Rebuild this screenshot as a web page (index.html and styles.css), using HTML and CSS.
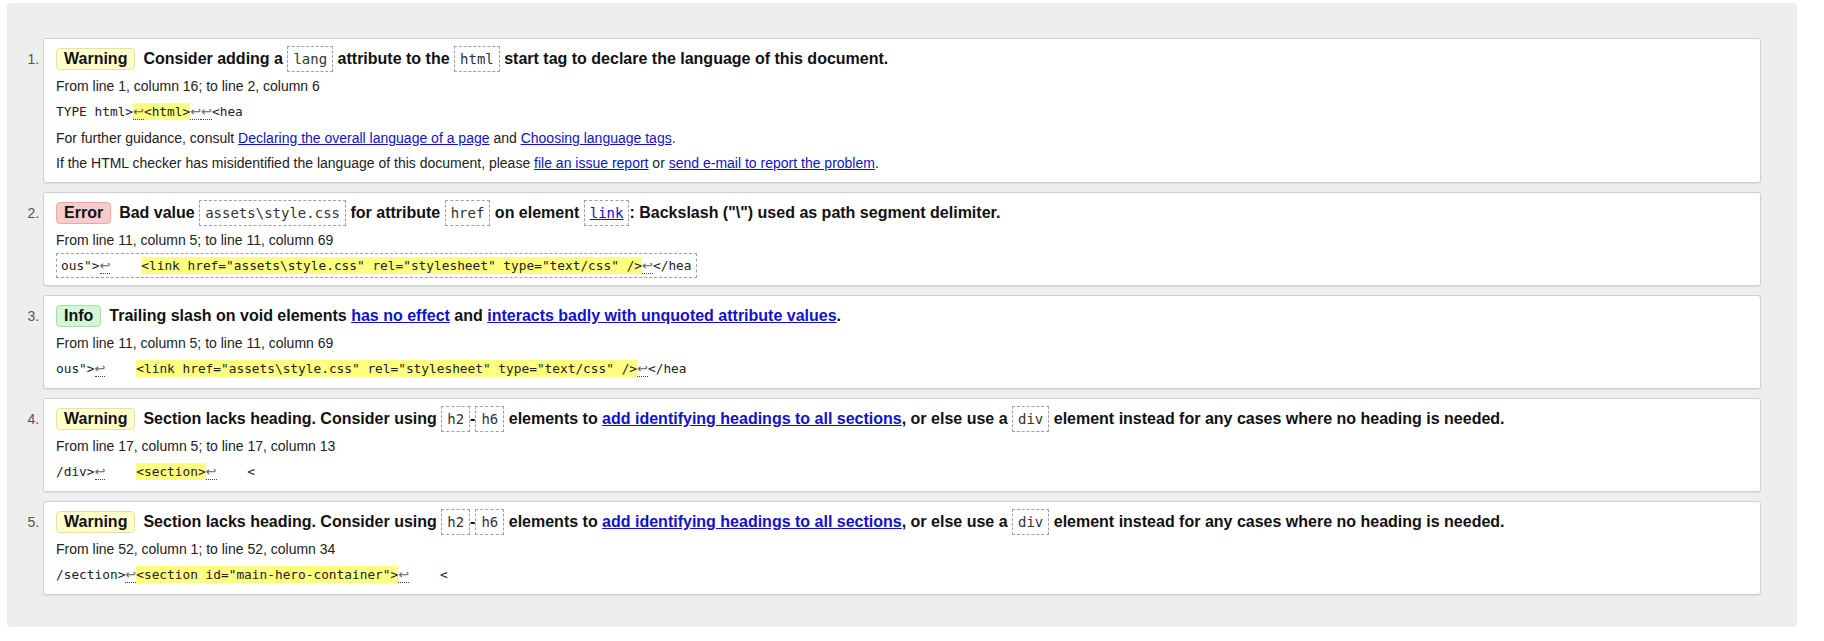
FILE: index.html
```html
<!DOCTYPE html>
<html lang="en">
<head>
<meta charset="utf-8">
<title>Validation results</title>
<link rel="stylesheet" href="styles.css">
</head>
<body>
<div class="results">
  <ol class="messages">
    <li class="msg">
      <p class="head"><strong class="badge warning">Warning</strong>Consider adding a <code>lang</code> attribute to the <code>html</code> start tag to declare the language of this document.</p>
      <p class="loc">From line 1, column 16; to line 2, column 6</p>
      <p class="extract"><span class="x">TYPE html&gt;<mark><span class="lf">↩</span>&lt;html&gt;</mark><span class="lf">↩</span><span class="lf">↩</span>&lt;hea</span></p>
      <p class="more">For further guidance, consult <a href="#">Declaring the overall language of a page</a> and <a href="#">Choosing language tags</a>.</p>
      <p class="more">If the HTML checker has misidentified the language of this document, please <a href="#">file an issue report</a> or <a href="#">send e-mail to report the problem</a>.</p>
    </li>
    <li class="msg">
      <p class="head"><strong class="badge error">Error</strong>Bad value <code>assets\style.css</code> for attribute <code>href</code> on element <code><a href="#">link</a></code>: Backslash ("\") used as path segment delimiter.</p>
      <p class="loc">From line 11, column 5; to line 11, column 69</p>
      <p class="extract"><span class="x boxed">ous"&gt;<span class="lf">↩</span>    <mark>&lt;link href="assets\style.css" rel="stylesheet" type="text/css" /&gt;</mark><span class="lf">↩</span>&lt;/hea</span></p>
    </li>
    <li class="msg">
      <p class="head"><strong class="badge info">Info</strong>Trailing slash on void elements <a href="#">has no effect</a> and <a href="#">interacts badly with unquoted attribute values</a>.</p>
      <p class="loc">From line 11, column 5; to line 11, column 69</p>
      <p class="extract"><span class="x">ous"&gt;<span class="lf">↩</span>    <mark>&lt;link href="assets\style.css" rel="stylesheet" type="text/css" /&gt;</mark><span class="lf">↩</span>&lt;/hea</span></p>
    </li>
    <li class="msg">
      <p class="head"><strong class="badge warning">Warning</strong>Section lacks heading. Consider using <code>h2</code>-<code>h6</code> elements to <a href="#">add identifying headings to all sections</a>, or else use a <code>div</code> element instead for any cases where no heading is needed.</p>
      <p class="loc">From line 17, column 5; to line 17, column 13</p>
      <p class="extract"><span class="x">/div&gt;<span class="lf">↩</span>    <mark>&lt;section&gt;</mark><span class="lf">↩</span>    &lt;</span></p>
    </li>
    <li class="msg">
      <p class="head"><strong class="badge warning">Warning</strong>Section lacks heading. Consider using <code>h2</code>-<code>h6</code> elements to <a href="#">add identifying headings to all sections</a>, or else use a <code>div</code> element instead for any cases where no heading is needed.</p>
      <p class="loc">From line 52, column 1; to line 52, column 34</p>
      <p class="extract"><span class="x">/section&gt;<span class="lf">↩</span><mark>&lt;section id="main-hero-container"&gt;</mark><span class="lf">↩</span>    &lt;</span></p>
    </li>
  </ol>
</div>
</body>
</html>
```
FILE: styles.css
```css
html, body {
  margin: 0;
  padding: 0;
  background: #ffffff;
}

body {
  font-family: "Liberation Sans", Arial, sans-serif;
  font-size: 14px;
  color: #222222;
}

.results {
  margin: 3px 27px 0 7px;
  background: #eeeeee;
  border-radius: 4px;
}

.messages {
  margin: 0;
  padding: 35px 36px 32px 36px;
  list-style: decimal outside;
}

.msg {
  background: #ffffff;
  border: 1px solid #cfcfcf;
  border-radius: 3px;
  box-shadow: 0 1px 1px rgba(0, 0, 0, 0.08);
  padding: 8px 12px 10px 12px;
  margin: 0 0 9px 0;
}

.msg:last-child {
  margin-bottom: 0;
}

.msg::marker {
  color: #555555;
  font-family: "Liberation Sans", Arial, sans-serif;
  font-size: 14px;
  font-weight: normal;
}

.msg p {
  margin: 0;
}

.head {
  font-size: 16px;
  font-weight: bold;
  line-height: 24px;
  color: #111111;
}

.badge {
  display: inline-block;
  padding: 1px 7px;
  line-height: 18px;
  border-radius: 4px;
  border: 1px solid transparent;
  margin-right: 8px;
  color: #111111;
}

.badge.warning {
  background: #ffffcc;
  border-color: #e6e0a6;
}

.badge.error {
  background: #f9cccc;
  border-color: #e8a8a8;
}

.badge.info {
  background: #d3f7d3;
  border-color: #a9dca9;
}

code {
  font-family: "DejaVu Sans Mono", "Liberation Mono", monospace;
  font-size: 14px;
  font-weight: normal;
  line-height: 1;
  color: #333333;
  border: 1px dashed #a0a0a0;
  padding: 4px 5px;
}

a {
  color: #1111cc;
  text-decoration: underline;
}

.loc {
  margin-top: 6px !important;
  line-height: 18px;
}

.extract {
  margin-top: 7px !important;
  line-height: 19px;
}

.x {
  font-family: "DejaVu Sans Mono", "Liberation Mono", monospace;
  font-size: 12.8px;
  line-height: 1;
  color: #222222;
  white-space: pre;
}

.x.boxed {
  border: 1px dashed #a0a0a0;
  padding: 4px 4px;
}

mark {
  background: #ffff80;
  color: inherit;
  padding: 1px 0;
}

.lf {
  font-family: "DejaVu Sans", sans-serif;
  font-size: 13px;
  line-height: 1;
  color: #666666;
  border-bottom: 1px dotted #444444;
}

.more {
  margin-top: 7.5px !important;
  line-height: 18px;
}
```
